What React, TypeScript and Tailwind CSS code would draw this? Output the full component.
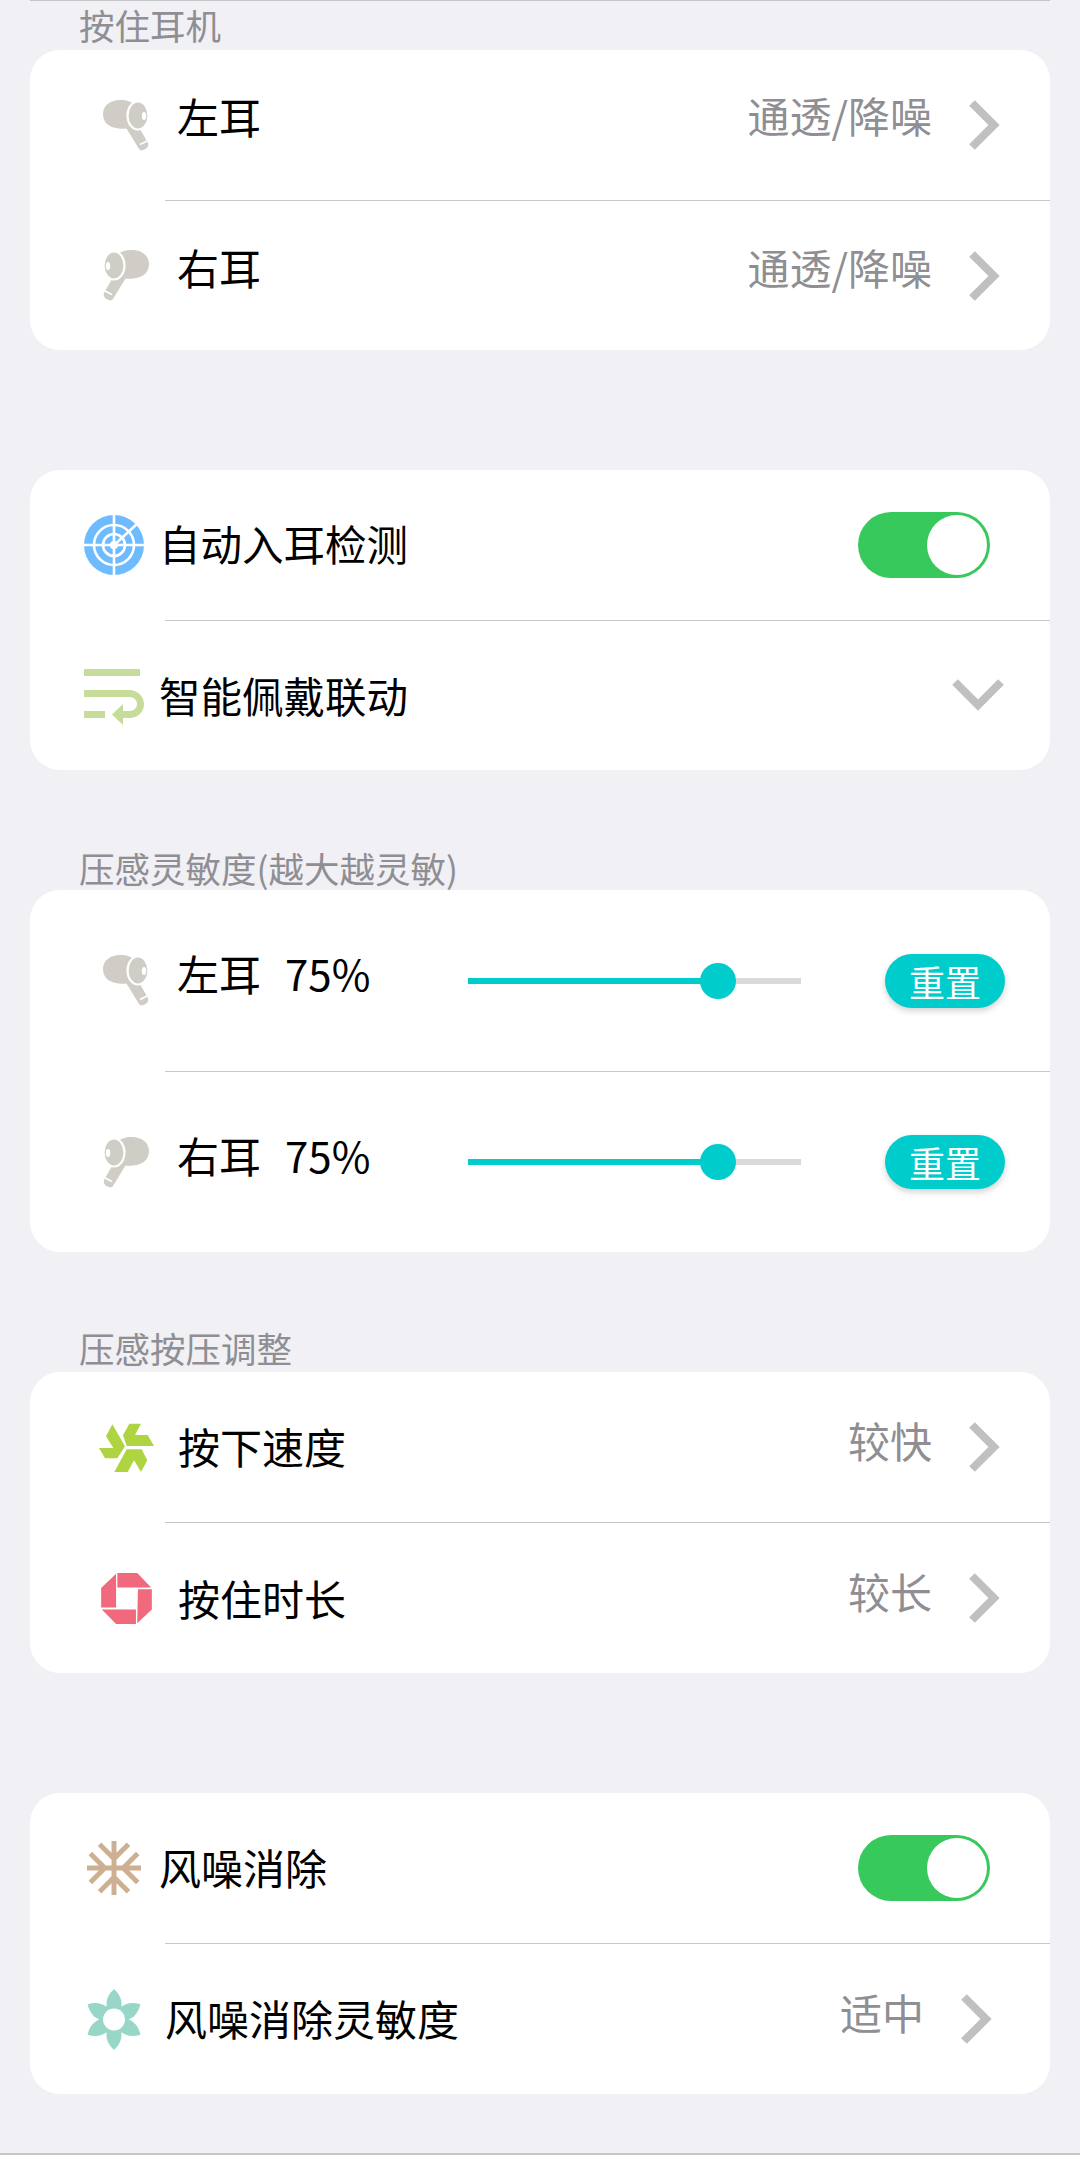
const font = "font-['Noto_Sans_CJK_SC','Noto_Sans',sans-serif]";

function EarIcon({ right }: { right?: boolean }) {
  return (
    <svg width="46" height="51" viewBox="0 0 46 51" className={right ? "-scale-x-100" : ""}>
      <path d="M22 26 L33 22 L45 43 C46 46 44 49 40 50 C38 51 37 50 36 49 Z" fill="#cfcdc6" />
      <path d="M37 44.5 L45 40.5" stroke="#fff" strokeWidth="1.6" />
      <path d="M0 14 C0 5 8 0 17 0 C24 0 29 2 32 5 L32 26 C28 29 22 29 16 28.5 C7 28 0 23 0 14 Z" fill="#cfcdc6" />
      <ellipse cx="35" cy="15.5" rx="10.5" ry="14" fill="#cfcdc6" stroke="#fff" strokeWidth="2.2" />
      <ellipse cx="41" cy="16" rx="2.2" ry="4" fill="#fff" />
    </svg>
  );
}

function Chevron() {
  return (
    <svg width="32" height="50" viewBox="0 0 32 50">
      <path d="M4 3 L26 25 L4 47" fill="none" stroke="#c0c0c0" strokeWidth="8" />
    </svg>
  );
}

function ChevronDown() {
  return (
    <svg width="52" height="33" viewBox="0 0 52 33">
      <path d="M3 3 L26 26 L49 3" fill="none" stroke="#c0c0c0" strokeWidth="8" />
    </svg>
  );
}

function Toggle() {
  return (
    <div className="flex h-[66px] w-[132px] items-center justify-end rounded-full bg-[#38c95c] pr-[3px]">
      <div className="h-[60px] w-[60px] rounded-full bg-white" />
    </div>
  );
}

function TargetIcon() {
  return (
    <svg width="60" height="60" viewBox="0 0 60 60">
      <circle cx="30" cy="30" r="30" fill="#6ebcff" />
      <circle cx="30" cy="30" r="20" fill="none" stroke="#fff" strokeWidth="2.6" />
      <circle cx="30" cy="30" r="11" fill="none" stroke="#fff" strokeWidth="2.6" />
      <circle cx="30" cy="30" r="4" fill="#fff" />
      <path d="M30 0 V60 M0 30 H60 M27 33 L54 8" stroke="#fff" strokeWidth="2.6" />
    </svg>
  );
}

function WrapIcon() {
  return (
    <svg width="60" height="56" viewBox="0 0 60 56">
      <path d="M0 0 H56 V7 H0 Z M0 21 H45 C54 21 60 28 60 35 C60 43 54 49 45 49 H36 V42 H45 C50 42 53 39 53 35 C53 31 50 28 45 28 H0 Z M0 42 H21 V49 H0 Z" fill="#c5dc9b" />
      <path d="M39 35 L28 45.5 L39 56 Z" fill="#c5dc9b" />
    </svg>
  );
}

function PinwheelIcon() {
  return (
    <svg width="55" height="49" viewBox="117 68 165 147">
      <path
        d="M157 72 L195 138 L172 174 L135 174 L117 143 L160 143 L138 108 Z M208 70 L243 70 L225 104 L263 104 L282 137 L200 137 L189 105 Z M200 147 L245 147 L262 180 L243 215 L222 180 L203 215 L163 215 Z"
        fill="#aed442"
      />
    </svg>
  );
}

function OctagonIcon() {
  return (
    <svg width="51" height="51" viewBox="123 518 153 154">
      <path
        d="M172 518 L232 518 L274 562 L172 562 Z M234 567 L276 567 L276 628 L232 670 Z M228 672 L168 672 L125 628 L228 628 Z M123 563 L168 520 L168 622 L123 622 Z"
        fill="#f0697c"
      />
    </svg>
  );
}

function SnowIcon() {
  return (
    <svg width="54" height="54" viewBox="80 62 164 164">
      <path
        d="M162 62 V226 M80 144 H244 M118 72 L162 116 L206 72 M118 216 L162 172 L206 216 M90 100 L134 144 L90 188 M234 100 L190 144 L234 188"
        fill="none"
        stroke="#cdb092"
        strokeWidth="15"
      />
    </svg>
  );
}

function FlowerIcon() {
  return (
    <svg width="54" height="61" viewBox="0 0 160 184">
      {[0, 60, 120, 180, 240, 300].map((r) => (
        <path
          key={r}
          d="M80 0 C108 26 112 58 80 92 C48 58 52 26 80 0 Z"
          fill="#98d6c8"
          transform={`rotate(${r} 80 92)`}
        />
      ))}
      <circle cx="80" cy="92" r="46" fill="#98d6c8" />
      <circle cx="80" cy="92" r="33" fill="#fff" />
    </svg>
  );
}

function Slider() {
  return (
    <div className="relative h-[6px] w-[333px] bg-[#d9d9d9]">
      <div className="h-[6px] w-[250px] bg-[#00cccc]" />
      <div className="absolute left-[232px] top-[-15px] h-[36px] w-[36px] rounded-full bg-[#00cccc]" />
    </div>
  );
}

function ResetButton() {
  return (
    <div className="flex h-[54px] w-[120px] items-center justify-center rounded-full bg-[#00cccc] text-[36px] leading-none text-white shadow-[0_3px_6px_rgba(0,0,0,0.18)]">
      重置
    </div>
  );
}

function Divider() {
  return <div className="ml-[135px] h-px bg-[#c6c6c8]" />;
}

function Value({ children, className }: { children: string; className: string }) {
  return <span className={`ml-auto text-[42px] leading-none text-[#8e8e93] ${className}`}>{children}</span>;
}

function SectionTitle({ children, className }: { children: string; className: string }) {
  return <div className={`pl-[79px] text-[35.5px] leading-none text-[#8e8e93] ${className}`}>{children}</div>;
}

function Card({ className, children }: { className?: string; children: React.ReactNode }) {
  return <div className={`mx-[30px] overflow-hidden rounded-[30px] bg-white ${className ?? ""}`}>{children}</div>;
}

function SliderRow({ right }: { right?: boolean }) {
  return (
    <div className={`flex items-center pl-[73px] ${right ? "h-[180px]" : "h-[181px]"}`}>
      <EarIcon right={right} />
      <span className="mb-[15px] ml-[28px] w-[291px] text-[42px] leading-none text-black">
        {right ? "右耳" : "左耳"}
        <span className="ml-[24px]">75%</span>
      </span>
      <Slider />
      <div className="ml-[84px]">
        <ResetButton />
      </div>
    </div>
  );
}

export default function App() {
  return (
    <div className={`flex h-[2168px] w-[1080px] flex-col overflow-hidden bg-[#f0f0f5] ${font}`}>
      <div className="mx-[30px] h-px shrink-0 bg-[#c6c6c8]" />
      <SectionTitle className="mt-[6px] h-[43px]">按住耳机</SectionTitle>

      <Card>
        <div className="flex h-[150px] items-center pl-[73px] pr-[50px]">
          <EarIcon />
          <span className="mb-[18px] ml-[28px] text-[42px] leading-none text-black">左耳</span>
          <Value className="mb-[20px]">通透/降噪</Value>
          <span className="ml-[36px]"><Chevron /></span>
        </div>
        <Divider />
        <div className="flex h-[149px] items-center pl-[73px] pr-[50px]">
          <EarIcon right />
          <span className="mb-[18px] ml-[28px] text-[42px] leading-none text-black">右耳</span>
          <Value className="mb-[18px]">通透/降噪</Value>
          <span className="ml-[36px]"><Chevron /></span>
        </div>
      </Card>

      <Card className="mt-[120px]">
        <div className="flex h-[150px] items-center pl-[54px] pr-[60px]">
          <TargetIcon />
          <span className="mb-[2px] ml-[15px] text-[41.5px] leading-none text-black">自动入耳检测</span>
          <span className="ml-auto"><Toggle /></span>
        </div>
        <Divider />
        <div className="flex h-[149px] items-center pl-[54px] pr-[46px]">
          <span className="mt-[3px]"><WrapIcon /></span>
          <span className="ml-[15px] text-[41.5px] leading-none text-black">智能佩戴联动</span>
          <span className="ml-auto"><ChevronDown /></span>
        </div>
      </Card>

      <SectionTitle className="mt-[80px] h-[40px]">压感灵敏度(越大越灵敏)</SectionTitle>

      <Card>
        <SliderRow />
        <Divider />
        <SliderRow right />
      </Card>

      <SectionTitle className="mt-[78px] h-[42px]">压感按压调整</SectionTitle>

      <Card>
        <div className="flex h-[150px] items-center pl-[69px] pr-[50px]">
          <PinwheelIcon />
          <span className="mb-[3px] ml-[24px] text-[42px] leading-none text-black">按下速度</span>
          <Value className="mb-[15px]">较快</Value>
          <span className="ml-[36px]"><Chevron /></span>
        </div>
        <Divider />
        <div className="flex h-[150px] items-center pl-[71px] pr-[50px]">
          <OctagonIcon />
          <span className="ml-[26px] text-[42px] leading-none text-black">按住时长</span>
          <Value className="mb-[15px]">较长</Value>
          <span className="ml-[36px]"><Chevron /></span>
        </div>
      </Card>

      <Card className="mt-[120px]">
        <div className="flex h-[150px] items-center pl-[57px] pr-[60px]">
          <SnowIcon />
          <span className="mb-[2px] ml-[18px] text-[42px] leading-none text-black">风噪消除</span>
          <span className="ml-auto"><Toggle /></span>
        </div>
        <Divider />
        <div className="flex h-[150px] items-center pl-[57px] pr-[58px]">
          <FlowerIcon />
          <span className="mb-[2px] ml-[24px] text-[42px] leading-none text-black">风噪消除灵敏度</span>
          <Value className="mb-[15px]">适中</Value>
          <span className="ml-[36px]"><Chevron /></span>
        </div>
      </Card>

      <div className="mt-[59px] h-[2px] shrink-0 bg-[#c6c6c8]" />
      <div className="grow bg-white" />
    </div>
  );
}
